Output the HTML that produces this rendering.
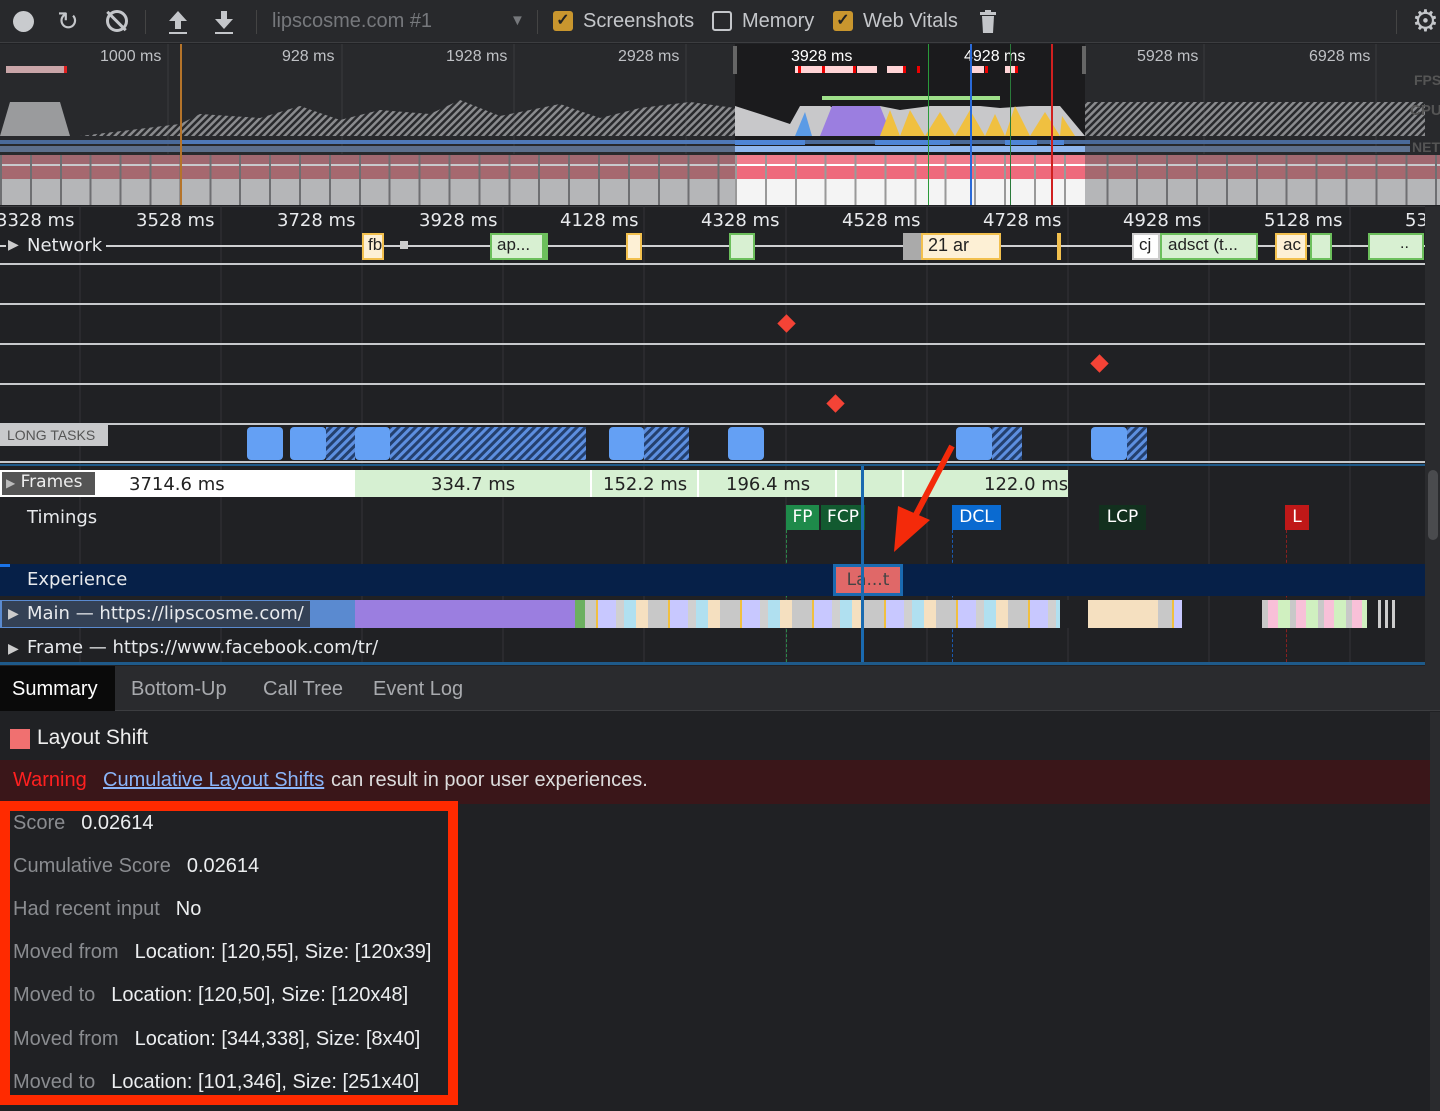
<!DOCTYPE html>
<html><head><meta charset="utf-8"><style>
*{margin:0;padding:0;box-sizing:border-box}
body{width:1440px;height:1111px;background:#202124;font-family:"Liberation Sans",sans-serif;color:#e8eaed;position:relative;overflow:hidden}
.a{position:absolute}
.tb{color:#c4c6ca;font-size:19px}
.rl{font-size:16px;color:#bfc1c5}
.tl{font-size:18px;color:#e8eaed;font-family:"DejaVu Sans","Liberation Sans",sans-serif}
.hl{position:absolute;left:0;width:1425px;height:2px;background:#c7c9cc}
.lbl{color:#8a8c90;font-size:20px;margin-right:16px}
.val{color:#eceef0;font-size:20px}
.ck{position:absolute;width:20px;height:20px;border-radius:3px;background:#c9962e;color:#222;font-size:16px;text-align:center;line-height:20px;font-weight:bold}
</style></head><body>
<!-- toolbar -->
<div class="a" style="left:0;top:0;width:1440px;height:43px;background:#28292c;border-bottom:1px solid #3c3d40"></div>
<div class="a" style="left:13px;top:11px;width:21px;height:21px;border-radius:50%;background:#c9cbce"></div>
<div class="a tb" style="left:57px;top:6px;font-size:26px">&#x21bb;</div>
<div class="a" style="left:106px;top:10px;width:22px;height:22px;border-radius:50%;border:3px solid #c4c6ca"></div>
<div class="a" style="left:115px;top:8px;width:3px;height:26px;background:#c4c6ca;transform:rotate(-45deg)"></div>
<div class="a" style="left:145px;top:10px;width:1px;height:24px;background:#444"></div>
<svg class="a" style="left:166px;top:9px" width="24" height="26"><path d="M12 2 L21 12 H15 V20 H9 V12 H3 Z" fill="#c4c6ca"/><rect x="3" y="23" width="18" height="2" fill="#c4c6ca"/></svg>
<svg class="a" style="left:212px;top:9px" width="24" height="26"><path d="M12 20 L21 10 H15 V2 H9 V10 H3 Z" fill="#c4c6ca"/><rect x="3" y="23" width="18" height="2" fill="#c4c6ca"/></svg>
<div class="a" style="left:256px;top:10px;width:1px;height:24px;background:#444"></div>
<div class="a tb" style="left:272px;top:10px;color:#76787c;font-size:20px">lipscosme.com #1</div>
<div class="a" style="left:510px;top:12px;color:#76787c;font-size:15px">&#9660;</div>
<div class="a" style="left:537px;top:10px;width:1px;height:24px;background:#444"></div>
<div class="ck" style="left:553px;top:11px">&#10003;</div>
<div class="a tb" style="left:583px;top:10px;font-size:20px">Screenshots</div>
<div class="a" style="left:712px;top:11px;width:20px;height:20px;border-radius:3px;border:2px solid #c4c6ca"></div>
<div class="a tb" style="left:742px;top:10px;font-size:20px">Memory</div>
<div class="ck" style="left:833px;top:11px">&#10003;</div>
<div class="a tb" style="left:863px;top:10px;font-size:20px">Web Vitals</div>
<svg class="a" style="left:978px;top:9px" width="20" height="26"><rect x="2" y="3" width="16" height="3" fill="#c4c6ca"/><rect x="7" y="1" width="6" height="3" fill="#c4c6ca"/><path d="M4 7 H16 L15 24 H5 Z" fill="#c4c6ca"/></svg>
<div class="a" style="left:1396px;top:10px;width:1px;height:24px;background:#444"></div>
<div class="a tb" style="left:1412px;top:4px;font-size:30px">&#9881;</div>

<!-- overview -->
<div class="a" style="left:0;top:44px;width:1440px;height:111px;background:#28292c"></div>
<div class="a" style="left:735px;top:44px;width:350px;height:160px;background:#1b1b1d"></div>
<svg class="a" style="left:0;top:44px" width="1440" height="160">
<defs><pattern id="h" width="5" height="5" patternUnits="userSpaceOnUse" patternTransform="rotate(45)"><rect width="2.5" height="5" fill="#8a8b8e"/></pattern></defs>
<g stroke="#3a3b3e"><line x1="168" y1="0" x2="168" y2="110"/><line x1="342" y1="0" x2="342" y2="110"/><line x1="514" y1="0" x2="514" y2="110"/><line x1="686" y1="0" x2="686" y2="110"/><line x1="1204" y1="0" x2="1204" y2="110"/><line x1="1376" y1="0" x2="1376" y2="110"/></g>
<rect x="6" y="22" width="58" height="7" fill="#c9a5a8"/><rect x="64" y="22" width="3" height="7" fill="#e02020"/>
<path d="M0 92 L10 58 L60 58 L70 92 Z" fill="#9a9b9d"/>
<path d="M80 92 L180 80 L200 70 L260 74 L300 62 L340 76 L380 66 L430 70 L460 56 L500 72 L560 60 L600 74 L640 64 L690 58 L735 64 L735 92 Z" fill="url(#h)"/>
<path d="M1085 58 L1425 58 L1425 92 L1085 92 Z" fill="url(#h)"/>
<path d="M735 92 L735 62 L760 70 L790 80 L800 62 L830 62 L840 70 L860 62 L880 62 L900 66 L930 62 L980 62 L1000 64 L1030 62 L1060 62 L1085 92 Z" fill="#c8c8ca"/>
<path d="M820 92 L832 62 L880 62 L892 92 Z" fill="#9b7ee0"/>
<path d="M795 92 L805 68 L812 92 Z" fill="#5b9be6"/>
<path d="M880 92 L890 66 L900 92 L910 66 L925 92 L940 68 L955 92 L970 66 L985 92 L995 70 L1005 92 L1015 62 L1030 92 L1045 68 L1060 92 Z" fill="#f0c040"/>
<path d="M1060 92 L1062 72 L1075 92 Z" fill="#f0c040"/>
<rect x="822" y="52" width="178" height="4" fill="#9fe08a"/>
<g fill="#ffd4d6"><rect x="795" y="22" width="60" height="7"/><rect x="857" y="22" width="20" height="7"/><rect x="887" y="22" width="16" height="7"/><rect x="970" y="22" width="14" height="7"/><rect x="1005" y="22" width="12" height="7"/></g>
<g fill="#e00"><rect x="798" y="22" width="3" height="7"/><rect x="822" y="22" width="3" height="7"/><rect x="853" y="22" width="3" height="7"/><rect x="903" y="22" width="3" height="7"/><rect x="917" y="22" width="3" height="7"/><rect x="985" y="22" width="3" height="7"/><rect x="1015" y="22" width="3" height="7"/></g>
<rect x="0" y="96" width="1410" height="4" fill="#4a6a9a"/>
<rect x="180" y="96" width="555" height="4" fill="#4f79b8"/>
<rect x="0" y="102" width="1410" height="6" fill="#5d6f8c"/>
<rect x="735" y="102" width="350" height="6" fill="#8fb6ee"/>
<g fill="#4e85d6"><rect x="735" y="96" width="70" height="5"/><rect x="875" y="96" width="75" height="5"/><rect x="1005" y="96" width="32" height="5"/><rect x="1050" y="96" width="14" height="5"/></g>
<rect x="733" y="2" width="4" height="28" fill="#666"/><rect x="1082" y="2" width="4" height="28" fill="#666"/>
</svg>
<div class="a rl" style="left:100px;top:48px">1000 ms</div>
<div class="a rl" style="left:282px;top:48px">928 ms</div>
<div class="a rl" style="left:446px;top:48px">1928 ms</div>
<div class="a rl" style="left:618px;top:48px">2928 ms</div>
<div class="a rl" style="left:791px;top:48px;color:#fff">3928 ms</div>
<div class="a rl" style="left:964px;top:48px;color:#fff">4928 ms</div>
<div class="a rl" style="left:1137px;top:48px">5928 ms</div>
<div class="a rl" style="left:1309px;top:48px">6928 ms</div>
<div class="a" style="left:1414px;top:72px;color:#555;font-size:14px;font-weight:bold">FPS</div>
<div class="a" style="left:1410px;top:102px;color:#555;font-size:15px;font-weight:bold">CPU</div>
<div class="a" style="left:1412px;top:139px;color:#555;font-size:14px;font-weight:bold">NET</div>
<!-- screenshots strip -->
<div class="a" style="left:0;top:155px;width:1440px;height:50px;background:repeating-linear-gradient(90deg,#6e6f72 0 2px,transparent 2px 29.9px),linear-gradient(180deg,#a06870 0 18%,#c8c9cc 18% 22%,#a6686f 22% 48%,#b5b6b8 48% 100%)"></div>
<div class="a" style="left:735px;top:155px;width:350px;height:50px;background:repeating-linear-gradient(90deg,#999 0 2px,transparent 2px 29.9px),linear-gradient(180deg,#f07c8c 0 18%,#fff 18% 22%,#ee6a7c 22% 48%,#f4f4f4 48% 100%)"></div>
<div class="a" style="left:180px;top:44px;width:2px;height:161px;background:#b5742a"></div>
<div class="a" style="left:928px;top:44px;width:1px;height:161px;background:#2a9a3a"></div>
<div class="a" style="left:970px;top:44px;width:2px;height:161px;background:#2a6ad8"></div>
<div class="a" style="left:1010px;top:44px;width:1px;height:161px;background:#2a7a3a"></div>
<div class="a" style="left:1051px;top:44px;width:2px;height:161px;background:#d02020"></div>

<!-- main ruler -->
<div class="a" style="left:0;top:206px;width:1425px;height:1px;background:#3a3b3e"></div>
<div class="a tl" style="left:-4px;top:210px">3328 ms</div>
<div class="a tl" style="left:136px;top:210px">3528 ms</div>
<div class="a tl" style="left:277px;top:210px">3728 ms</div>
<div class="a tl" style="left:419px;top:210px">3928 ms</div>
<div class="a tl" style="left:560px;top:210px">4128 ms</div>
<div class="a tl" style="left:701px;top:210px">4328 ms</div>
<div class="a tl" style="left:842px;top:210px">4528 ms</div>
<div class="a tl" style="left:983px;top:210px">4728 ms</div>
<div class="a tl" style="left:1123px;top:210px">4928 ms</div>
<div class="a tl" style="left:1264px;top:210px">5128 ms</div>
<div class="a tl" style="left:1405px;top:210px">53</div>
<svg class="a" style="left:0;top:206px" width="1425" height="460">
<g stroke="#333438"><line x1="80" y1="0" x2="80" y2="458"/><line x1="221" y1="0" x2="221" y2="458"/><line x1="362" y1="0" x2="362" y2="458"/><line x1="503" y1="0" x2="503" y2="458"/><line x1="644" y1="0" x2="644" y2="458"/><line x1="786" y1="0" x2="786" y2="458"/><line x1="927" y1="0" x2="927" y2="458"/><line x1="1068" y1="0" x2="1068" y2="458"/><line x1="1209" y1="0" x2="1209" y2="458"/><line x1="1350" y1="0" x2="1350" y2="458"/></g>
</svg>
<!-- network row -->
<div class="a" style="left:8px;top:236px;color:#ccc;font-size:14px">&#9654;</div>
<div class="a tl" style="left:27px;top:235px">Network</div>
<div class="a" style="left:106px;top:245px;width:1320px;height:2px;background:#cfd0d2"></div>
<div class="a" style="left:0;top:245px;width:6px;height:2px;background:#cfd0d2"></div>
<div class="a" style="left:362px;top:233px;width:22px;height:27px;background:#fdf0d5;border:2px solid #f2c04e;color:#222;font-size:17px;padding-left:4px">fb</div>
<div class="a" style="left:400px;top:241px;width:8px;height:8px;background:#ccc"></div>
<div class="a" style="left:490px;top:233px;width:58px;height:27px;background:#d8f0d2;border:2px solid #6cbf5c;border-right:6px solid #6cbf5c;color:#222;font-size:17px;padding-left:5px">ap...</div>
<div class="a" style="left:626px;top:233px;width:16px;height:27px;background:#fdf0d5;border:2px solid #f2c04e"></div>
<div class="a" style="left:729px;top:233px;width:26px;height:27px;background:#d8f0d2;border:2px solid #6cbf5c"></div>
<div class="a" style="left:903px;top:233px;width:18px;height:27px;background:#aaa"></div>
<div class="a" style="left:921px;top:233px;width:80px;height:27px;background:#fdf0d5;border:2px solid #f2c04e;color:#222;font-size:18px;padding-left:5px">21 ar</div>
<div class="a" style="left:1057px;top:233px;width:4px;height:27px;background:#f2c04e"></div>
<div class="a" style="left:1132px;top:233px;width:28px;height:27px;background:#fff;border:2px solid #ccc;color:#222;font-size:17px;padding-left:5px">cj</div>
<div class="a" style="left:1160px;top:233px;width:98px;height:27px;background:#d8f0d2;border:2px solid #6cbf5c;color:#222;font-size:17px;padding-left:6px">adsct (t...</div>
<div class="a" style="left:1275px;top:233px;width:32px;height:27px;background:#fdf0d5;border:2px solid #f2c04e;color:#222;font-size:17px;padding-left:6px">ac</div>
<div class="a" style="left:1310px;top:233px;width:22px;height:27px;background:#d8f0d2;border:2px solid #6cbf5c"></div>
<div class="a" style="left:1368px;top:233px;width:56px;height:27px;background:#d8f0d2;border:2px solid #6cbf5c;color:#222;font-size:16px;padding-left:30px">..</div>
<!-- track lines -->
<div class="hl" style="top:263px"></div>
<div class="hl" style="top:303px"></div>
<div class="hl" style="top:343px"></div>
<div class="hl" style="top:383px"></div>
<div class="hl" style="top:423px"></div>
<div class="a" style="left:780px;top:317px;width:13px;height:13px;background:#f44336;transform:rotate(45deg)"></div>
<div class="a" style="left:1093px;top:357px;width:13px;height:13px;background:#f44336;transform:rotate(45deg)"></div>
<div class="a" style="left:829px;top:397px;width:13px;height:13px;background:#f44336;transform:rotate(45deg)"></div>
<!-- long tasks -->
<div class="a" style="left:0;top:425px;width:108px;height:21px;background:#c8c9cb;color:#555;font-size:14px;padding:2px 0 0 7px">LONG TASKS</div>
<svg class="a" style="left:0;top:425px" width="1425" height="40">
<defs><pattern id="lt" width="6" height="6" patternUnits="userSpaceOnUse" patternTransform="rotate(45)"><rect width="6" height="6" fill="#5d8fe0"/><rect width="3" height="6" fill="#24406e"/></pattern></defs>
<g fill="#64a0f4"><rect x="247" y="2" width="36" height="33" rx="4"/><rect x="290" y="2" width="36" height="33" rx="4"/><rect x="355" y="2" width="35" height="33" rx="4"/><rect x="609" y="2" width="35" height="33" rx="4"/><rect x="728" y="2" width="36" height="33" rx="4"/><rect x="956" y="2" width="36" height="33" rx="4"/><rect x="1091" y="2" width="36" height="33" rx="4"/></g>
<rect x="326" y="2" width="29" height="33" fill="url(#lt)"/><rect x="390" y="2" width="196" height="33" fill="url(#lt)"/><rect x="644" y="2" width="45" height="33" fill="url(#lt)"/><rect x="992" y="2" width="30" height="33" fill="url(#lt)"/><rect x="1127" y="2" width="20" height="33" fill="url(#lt)"/>
</svg>
<div class="hl" style="top:461px"></div>
<div class="a" style="left:0;top:464px;width:1425px;height:2px;background:#1e5a8a"></div>
<!-- frames -->
<div class="a" style="left:0;top:470px;width:355px;height:27px;background:#fff"></div>
<div class="a" style="left:355px;top:470px;width:713px;height:27px;background:#d6f0d2"></div>
<div class="a" style="left:590px;top:470px;width:2px;height:27px;background:#fff"></div>
<div class="a" style="left:697px;top:470px;width:2px;height:27px;background:#fff"></div>
<div class="a" style="left:835px;top:470px;width:2px;height:27px;background:#fff"></div>
<div class="a" style="left:902px;top:470px;width:2px;height:27px;background:#fff"></div>
<div class="a" style="left:2px;top:472px;width:93px;height:23px;background:#555;color:#eee;font-size:17px;padding-left:4px;font-family:'DejaVu Sans',sans-serif"><span style="font-size:12px;color:#bbb">&#9654;</span> Frames</div>
<div class="a tl" style="left:129px;top:474px;color:#222">3714.6 ms</div>
<div class="a tl" style="left:431px;top:474px;color:#222">334.7 ms</div>
<div class="a tl" style="left:603px;top:474px;color:#222">152.2 ms</div>
<div class="a tl" style="left:726px;top:474px;color:#222">196.4 ms</div>
<div class="a tl" style="left:984px;top:474px;color:#222">122.0 ms</div>
<!-- timings -->
<div class="a tl" style="left:27px;top:507px">Timings</div>
<div class="a" style="left:786px;top:505px;width:33px;height:25px;background:#1e8a4a;color:#fff;font-size:17px;text-align:center;line-height:25px;font-family:'DejaVu Sans',sans-serif">FP</div>
<div class="a" style="left:821px;top:505px;width:44px;height:25px;background:#125a30;color:#fff;font-size:17px;text-align:center;line-height:25px;font-family:'DejaVu Sans',sans-serif">FCP</div>
<div class="a" style="left:952px;top:505px;width:49px;height:25px;background:#0a6ad0;color:#fff;font-size:17px;text-align:center;line-height:25px;font-family:'DejaVu Sans',sans-serif">DCL</div>
<div class="a" style="left:1099px;top:505px;width:47px;height:25px;background:#12301e;color:#fff;font-size:17px;text-align:center;line-height:25px;font-family:'DejaVu Sans',sans-serif">LCP</div>
<div class="a" style="left:1285px;top:505px;width:24px;height:25px;background:#c01818;color:#fff;font-size:17px;text-align:center;line-height:25px;font-family:'DejaVu Sans',sans-serif">L</div>
<div class="a" style="left:786px;top:530px;width:0;height:132px;border-left:1px dashed #2a8a4a"></div>
<div class="a" style="left:952px;top:530px;width:0;height:132px;border-left:1px dashed #1a5ab0"></div>
<div class="a" style="left:1286px;top:530px;width:0;height:132px;border-left:1px dashed #8a2020"></div>
<!-- experience -->
<div class="a" style="left:0;top:564px;width:1425px;height:32px;background:#062048"></div>
<div class="a" style="left:0;top:564px;width:10px;height:3px;background:#1a73e8"></div>
<div class="a tl" style="left:27px;top:569px">Experience</div>
<div class="a" style="left:833px;top:564px;width:70px;height:32px;background:#e06868;border:3px solid #1a6ab0;color:#444;font-size:17px;text-align:center;line-height:26px;font-family:'DejaVu Sans',sans-serif">La...t</div>
<!-- main -->
<div class="a" style="left:0;top:600px;width:1182px;height:28px;background:repeating-linear-gradient(90deg,#c8c8c8 0 20px,#f0c040 20px 22px,#c8c8ff 22px 40px,#d0d0d0 40px 48px,#b0e0f0 48px 60px,#f5e0c0 60px 72px)"></div>
<div class="a" style="left:0;top:600px;width:355px;height:28px;background:#5a8ad0"></div>
<div class="a" style="left:355px;top:600px;width:220px;height:28px;background:#9b7ee0"></div>
<div class="a" style="left:575px;top:600px;width:10px;height:28px;background:#6cb060"></div>
<div class="a" style="left:1060px;top:600px;width:28px;height:28px;background:#202124"></div>
<div class="a" style="left:1088px;top:600px;width:70px;height:28px;background:#f5e0c0"></div>
<div class="a" style="left:1262px;top:600px;width:105px;height:28px;background:repeating-linear-gradient(90deg,#c8c8c8 0 6px,#f8c0d8 6px 16px,#d0f0c0 16px 28px)"></div>
<div class="a" style="left:1378px;top:600px;width:20px;height:28px;background:repeating-linear-gradient(90deg,#ccc 0 3px,transparent 3px 7px)"></div>
<div class="a" style="left:2px;top:601px;width:308px;height:26px;background:rgba(40,40,44,.75)"></div>
<div class="a" style="left:8px;top:605px;color:#ccc;font-size:14px">&#9654;</div>
<div class="a tl" style="left:27px;top:603px">Main — https://lipscosme.com/</div>
<div class="a" style="left:8px;top:640px;color:#ccc;font-size:14px">&#9654;</div>
<div class="a tl" style="left:27px;top:637px">Frame — https://www.facebook.com/tr/</div>
<div class="a" style="left:861px;top:466px;width:3px;height:198px;background:#1a6ab0"></div>
<!-- red arrow -->
<svg class="a" style="left:880px;top:440px" width="80" height="115"><line x1="72" y1="6" x2="30" y2="86" stroke="#f42a0a" stroke-width="6"/><path d="M14 112 L50 80 L18 66 Z" fill="#f42a0a"/></svg>
<div class="a" style="left:0;top:662px;width:1425px;height:3px;background:#1e5a8a"></div>
<!-- scrollbar -->
<div class="a" style="left:1425px;top:206px;width:15px;height:460px;background:#2a2b2e"></div>
<div class="a" style="left:1428px;top:470px;width:10px;height:70px;border-radius:5px;background:#4a4b4e"></div>
<!-- tabs -->
<div class="a" style="left:0;top:666px;width:1440px;height:45px;background:#2a2b2e;border-bottom:1px solid #3c3d40"></div>
<div class="a" style="left:0;top:666px;width:115px;height:45px;background:#0a0a0a"></div>
<div class="a" style="left:12px;top:678px;font-size:20px;color:#fff">Summary</div>
<div class="a" style="left:131px;top:678px;font-size:20px;color:#a8aaae">Bottom-Up</div>
<div class="a" style="left:263px;top:678px;font-size:20px;color:#a8aaae">Call Tree</div>
<div class="a" style="left:373px;top:678px;font-size:20px;color:#a8aaae">Event Log</div>
<div class="a" style="left:1430px;top:712px;width:10px;height:399px;background:#2a2b2e"></div>
<!-- summary -->
<div class="a" style="left:10px;top:729px;width:20px;height:20px;background:#f07070"></div>
<div class="a" style="left:37px;top:726px;font-size:21px;color:#eee">Layout Shift</div>
<div class="a" style="left:0;top:760px;width:1430px;height:44px;background:#3a1619"></div>
<div class="a" style="left:13px;top:769px;font-size:20px;color:#ff2020">Warning</div>
<div class="a" style="left:103px;top:769px;font-size:20px;color:#8ab4f8;text-decoration:underline">Cumulative Layout Shifts</div>
<div class="a" style="left:331px;top:769px;font-size:20px;color:#ddd">can result in poor user experiences.</div>
<div class="a" style="left:0;top:801px;width:458px;height:304px;border:10px solid #ff2a00"></div>
<div class="a" style="left:13px;top:812px"><span class="lbl">Score</span><span class="val">0.02614</span></div>
<div class="a" style="left:13px;top:855px"><span class="lbl">Cumulative Score</span><span class="val">0.02614</span></div>
<div class="a" style="left:13px;top:898px"><span class="lbl">Had recent input</span><span class="val">No</span></div>
<div class="a" style="left:13px;top:941px"><span class="lbl">Moved from</span><span class="val">Location: [120,55], Size: [120x39]</span></div>
<div class="a" style="left:13px;top:984px"><span class="lbl">Moved to</span><span class="val">Location: [120,50], Size: [120x48]</span></div>
<div class="a" style="left:13px;top:1028px"><span class="lbl">Moved from</span><span class="val">Location: [344,338], Size: [8x40]</span></div>
<div class="a" style="left:13px;top:1071px"><span class="lbl">Moved to</span><span class="val">Location: [101,346], Size: [251x40]</span></div>
</body></html>
